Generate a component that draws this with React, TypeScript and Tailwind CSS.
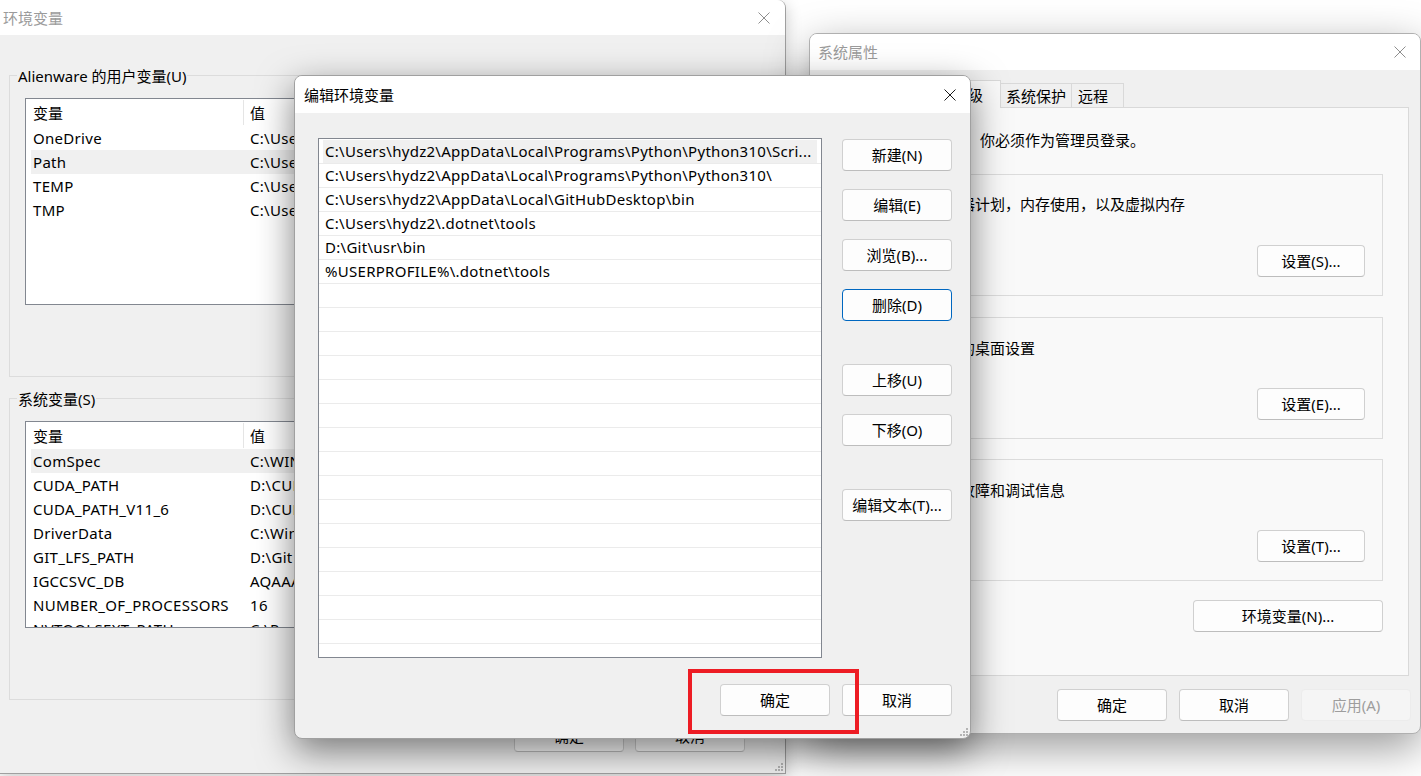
import React from "react";

function CloseIcon({ color }: { color: string }) {
  return (
    <svg width="12" height="12" viewBox="0 0 12 12" className="block shrink-0">
      <path d="M0.5 0.5L11.5 11.5M11.5 0.5L0.5 11.5" stroke={color} strokeWidth="1" fill="none" />
    </svg>
  );
}

function Grip() {
  const pts = [
    [6, 0],
    [3, 3],
    [6, 3],
    [0, 6],
    [3, 6],
    [6, 6],
  ];
  return (
    <svg width="8" height="8" viewBox="0 0 8 8" className="block">
      {pts.map(([x, y], i) => (
        <rect key={i} x={x} y={y} width="2" height="2" fill="#b4b4b4" />
      ))}
    </svg>
  );
}

function Btn({
  children,
  className = "",
  focused = false,
  disabled = false,
}: {
  children: React.ReactNode;
  className?: string;
  focused?: boolean;
  disabled?: boolean;
}) {
  const look = focused
    ? "border-[#0067c0] bg-[#fdfdfd] text-black"
    : disabled
    ? "border-[#ececec] bg-[#f5f5f5] text-[#9d9d9d]"
    : "border-[#d0d0d0] border-b-[#bdbdbd] bg-[#fdfdfd] text-black";
  return (
    <div
      className={`h-[32px] shrink-0 flex items-center justify-center rounded-[4px] border text-[15px] leading-[20px] whitespace-nowrap ${look} ${className}`}
    >
      {children}
    </div>
  );
}

function GroupBox({
  title,
  legendBg,
  className = "",
  children,
}: {
  title: string;
  legendBg: string;
  className?: string;
  children?: React.ReactNode;
}) {
  return (
    <div className={`relative border border-[#dcdcdc] ${className}`}>
      <span className={`absolute left-[7px] -top-[10px] px-[1px] leading-[20px] whitespace-nowrap ${legendBg}`}>
        {title}
      </span>
      {children}
    </div>
  );
}

function VarList({ rows, selected }: { rows: [string, string][]; selected: number }) {
  return (
    <div className="h-[207px] border border-[#828790] bg-white overflow-hidden">
      <div className="h-[27px] flex items-center leading-[20px]">
        <div className="w-[217px] pl-[7px]">变量</div>
        <div className="w-px h-[25px] bg-[#e5e5e5]" />
        <div className="pl-[6px]">值</div>
      </div>
      {rows.map(([k, v], i) => (
        <div
          key={k}
          className={`ml-[5px] h-[24px] flex items-center leading-[24px] whitespace-nowrap tracking-[0.3px] ${
            i === selected ? "bg-[#f0f0f0]" : ""
          }`}
        >
          <div className="w-[212px] pl-[2px] shrink-0">{k}</div>
          <div className="pl-[7px]">{v}</div>
        </div>
      ))}
    </div>
  );
}

const userVars: [string, string][] = [
  ["OneDrive", "C:\\Users\\hydz2\\OneDrive"],
  ["Path", "C:\\Users\\hydz2\\AppData\\Local\\Programs\\Python\\Python310\\Scripts\\"],
  ["TEMP", "C:\\Users\\hydz2\\AppData\\Local\\Temp"],
  ["TMP", "C:\\Users\\hydz2\\AppData\\Local\\Temp"],
];

const sysVars: [string, string][] = [
  ["ComSpec", "C:\\WINDOWS\\system32\\cmd.exe"],
  ["CUDA_PATH", "D:\\CUDA"],
  ["CUDA_PATH_V11_6", "D:\\CUDA"],
  ["DriverData", "C:\\Windows\\System32\\Drivers\\DriverData"],
  ["GIT_LFS_PATH", "D:\\Git LFS"],
  ["IGCCSVC_DB", "AQAAANCMnd8BFdERjHoAwE/Cl+sBAAAA"],
  ["NUMBER_OF_PROCESSORS", "16"],
  ["NVTOOLSEXT_PATH", "C:\\Program Files\\NVIDIA Corporation\\NvToolsExt\\"],
];

const pathItems = [
  "C:\\Users\\hydz2\\AppData\\Local\\Programs\\Python\\Python310\\Scri...",
  "C:\\Users\\hydz2\\AppData\\Local\\Programs\\Python\\Python310\\",
  "C:\\Users\\hydz2\\AppData\\Local\\GitHubDesktop\\bin",
  "C:\\Users\\hydz2\\.dotnet\\tools",
  "D:\\Git\\usr\\bin",
  "%USERPROFILE%\\.dotnet\\tools",
];

function EnvWindow() {
  return (
    <div className="absolute z-[1] left-0 top-0 w-[786px] h-[774px] flex flex-col bg-[#f0f0f0] border-r border-b border-[#a0a0a0] rounded-tr-[8px] shadow-[0_4px_16px_rgba(0,0,0,0.22)]">
      <div className="h-[35px] shrink-0 flex items-center justify-between bg-white rounded-tr-[8px] pl-[3px] pr-[15px] text-[#9b9b9b] leading-[20px]">
        <span>环境变量</span>
        <CloseIcon color="#8e8e8e" />
      </div>
      <div className="flex flex-col pl-[9px] pr-[10px] pt-[40px]">
        <GroupBox title="Alienware 的用户变量(U)" legendBg="bg-[#f0f0f0]" className="h-[302px] pt-[22px] px-[15px]">
          <VarList rows={userVars} selected={1} />
        </GroupBox>
        <GroupBox title="系统变量(S)" legendBg="bg-[#f0f0f0]" className="h-[302px] mt-[21px] pt-[22px] px-[15px]">
          <VarList rows={sysVars} selected={0} />
        </GroupBox>
        <div className="mt-[20px] mr-[30px] flex justify-end gap-[11px]">
          <Btn className="w-[110px]">确定</Btn>
          <Btn className="w-[110px]">取消</Btn>
        </div>
      </div>
      <div className="absolute right-[2px] bottom-[2px]">
        <Grip />
      </div>
    </div>
  );
}

function SysPropsWindow() {
  return (
    <div className="absolute z-[2] left-[809px] top-[33px] w-[612px] h-[701px] flex flex-col bg-[#f0f0f0] border border-[#b0b0b0] rounded-[8px] overflow-hidden shadow-[0_14px_44px_rgba(0,0,0,0.4)]">
      <div className="h-[36px] shrink-0 flex items-center justify-between bg-white pl-[8px] pr-[14px] text-[#9b9b9b] leading-[20px]">
        <span>系统属性</span>
        <CloseIcon color="#8e8e8e" />
      </div>
      <div className="flex flex-col pt-[10px] pl-[9px] pr-[11px]">
        <div className="relative z-10 h-[27px] flex items-end leading-[20px] whitespace-nowrap">
          <div className="w-[72px] h-[24px] flex items-center pl-[6px] bg-[#f0f0f0] border border-b-0 border-[#d9d9d9]">计算机名</div>
          <div className="w-[52px] h-[24px] flex items-center pl-[6px] bg-[#f0f0f0] border border-b-0 border-l-0 border-[#d9d9d9]">硬件</div>
          <div className="w-[58px] h-[28px] -mb-px flex items-center pl-[9px] bg-[#f9f9f9] border border-b-0 border-[#d9d9d9]">高级</div>
          <div className="w-[71px] h-[24px] flex items-center pl-[5px] bg-[#f0f0f0] border border-b-0 border-l-0 border-[#d9d9d9]">系统保护</div>
          <div className="w-[52px] h-[24px] flex items-center pl-[6px] bg-[#f0f0f0] border border-b-0 border-l-0 border-[#d9d9d9]">远程</div>
        </div>
        <div className="h-[569px] flex flex-col bg-[#f9f9f9] border border-[#d9d9d9] pl-[23px] pr-[25px] leading-[20px]">
          <div className="mt-[22px] ml-[2px] whitespace-nowrap">要进行大多数更改，你必须作为管理员登录。</div>
          <GroupBox title="性能" legendBg="bg-[#f9f9f9]" className="h-[122px] mt-[24px] flex flex-col pt-[19px] pl-[11px] pr-[17px]">
            <div className="whitespace-nowrap">视觉效果，处理器计划，内存使用，以及虚拟内存</div>
            <Btn className="w-[108px] mt-[31px] self-end">设置(S)...</Btn>
          </GroupBox>
          <GroupBox title="用户配置文件" legendBg="bg-[#f9f9f9]" className="h-[122px] mt-[21px] flex flex-col pt-[20px] pl-[11px] pr-[17px]">
            <div className="whitespace-nowrap">与登录帐户相关的桌面设置</div>
            <Btn className="w-[108px] mt-[30px] self-end">设置(E)...</Btn>
          </GroupBox>
          <GroupBox title="启动和故障恢复" legendBg="bg-[#f9f9f9]" className="h-[122px] mt-[20px] flex flex-col pt-[20px] pl-[11px] pr-[17px]">
            <div className="whitespace-nowrap">系统启动、系统故障和调试信息</div>
            <Btn className="w-[108px] mt-[30px] self-end">设置(T)...</Btn>
          </GroupBox>
          <Btn className="w-[190px] mt-[19px] self-end">环境变量(N)...</Btn>
        </div>
        <div className="mt-[13px] -mr-[2px] flex justify-end gap-[12px]">
          <Btn className="w-[110px]">确定</Btn>
          <Btn className="w-[110px]">取消</Btn>
          <Btn className="w-[110px]" disabled>
            应用(A)
          </Btn>
        </div>
      </div>
    </div>
  );
}

function EditDialog() {
  const rows = Array.from({ length: 22 }, (_, i) => pathItems[i] ?? "");
  return (
    <div className="absolute z-[3] left-[294px] top-[75px] w-[677px] h-[664px] flex flex-col bg-[#f0f0f0] border border-[#a0a0a0] rounded-[8px] overflow-hidden shadow-[0_12px_36px_rgba(0,0,0,0.5)]">
      <div className="h-[37px] shrink-0 flex items-center justify-between bg-white pl-[9px] pr-[14px] text-black leading-[20px]">
        <span>编辑环境变量</span>
        <CloseIcon color="#1a1a1a" />
      </div>
      <div className="flex flex-col pt-[25px] pl-[23px] pr-[18px]">
        <div className="flex">
          <div className="w-[504px] h-[520px] shrink-0 border border-[#828790] bg-white overflow-hidden pt-px">
            {rows.map((t, i) => (
              <div key={i} className="h-[24px] border-b border-[#ebebeb] flex">
                <div
                  className={`flex-1 mx-[4px] pl-[2px] flex items-center leading-[23px] whitespace-nowrap overflow-hidden tracking-[0.28px] ${
                    i === 0 ? "bg-[#f0f0f0]" : ""
                  }`}
                >
                  {t}
                </div>
              </div>
            ))}
          </div>
          <div className="ml-[20px] w-[110px] flex flex-col">
            <Btn className="mt-px">新建(N)</Btn>
            <Btn className="mt-[18px]">编辑(E)</Btn>
            <Btn className="mt-[18px]">浏览(B)...</Btn>
            <Btn className="mt-[18px]" focused>
              删除(D)
            </Btn>
            <Btn className="mt-[43px]">上移(U)</Btn>
            <Btn className="mt-[18px]">下移(O)</Btn>
            <Btn className="mt-[43px]">编辑文本(T)...</Btn>
          </div>
        </div>
        <div className="mt-[26px] flex justify-end gap-[12px]">
          <Btn className="w-[110px]">确定</Btn>
          <Btn className="w-[110px]">取消</Btn>
        </div>
      </div>
      <div className="absolute right-[2px] bottom-[2px]">
        <Grip />
      </div>
    </div>
  );
}

export default function App() {
  return (
    <div className="relative w-[1421px] h-[776px] overflow-hidden bg-white text-[15px] text-black font-['Noto_Sans','Noto_Sans_CJK_SC',sans-serif]">
      <EnvWindow />
      <SysPropsWindow />
      <EditDialog />
      <div className="absolute z-[4] left-[688px] top-[669px] w-[171px] h-[65px] border-4 border-[#ed1c24]" />
    </div>
  );
}
